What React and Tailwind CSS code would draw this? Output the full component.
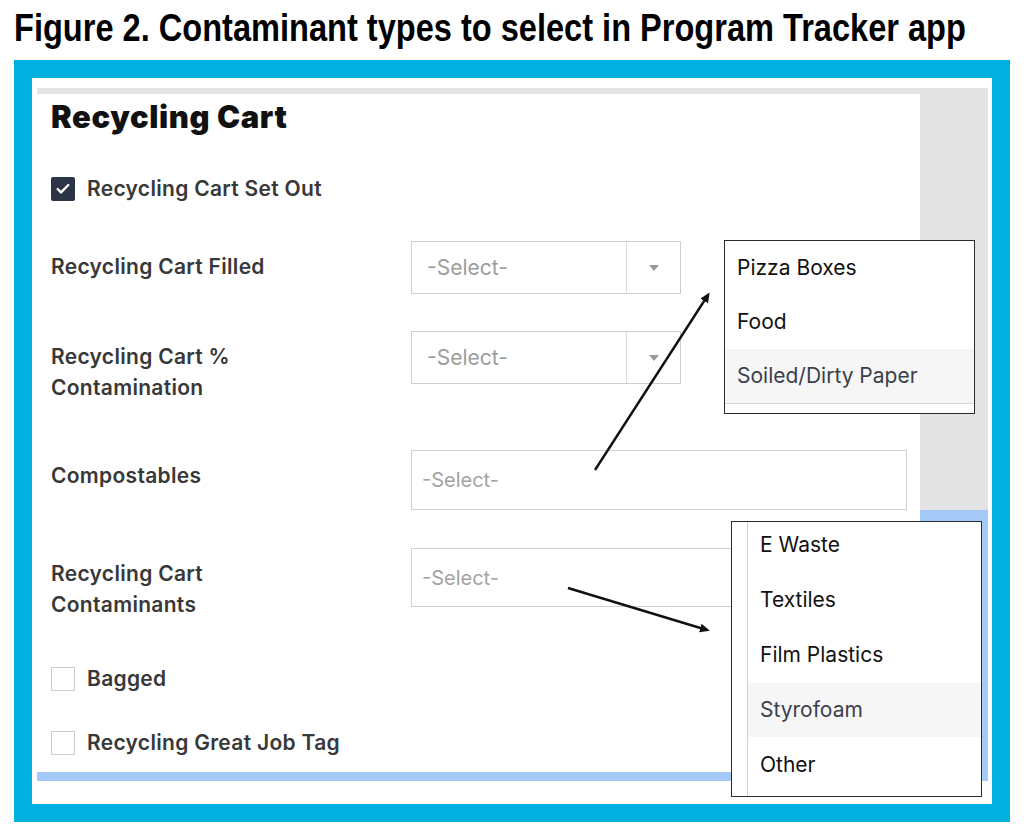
import { Check } from 'lucide-react';

const ui = "font-['Inter',sans-serif]";

const Caret = () => (
  <svg width="10" height="6" viewBox="0 0 10 6" className="block">
    <path d="M0 0 L10 0 L5 6 Z" fill="#9a9a9a" />
  </svg>
);

const Dropdown = () => (
  <div className="w-[270px] h-[53px] border border-[#cfcfcf] flex">
    <div className="flex-1 flex items-center pl-[15px] text-[21px] text-[#9c9c9c]">-Select-</div>
    <div className="w-[54px] border-l border-[#dcdcdc] flex items-center justify-center">
      <Caret />
    </div>
  </div>
);

const MultiInput = ({ h }) => (
  <div className={`w-[496px] ${h} border border-[#cfcfcf] flex items-center pl-[10px] text-[20px] text-[#a3a3a3]`}>
    -Select-
  </div>
);

const Box = ({ checked }) =>
  checked ? (
    <div className="w-[24px] h-[24px] rounded-[2px] bg-[#2e3447] flex items-center justify-center">
      <Check className="w-[16px] h-[16px] text-white" strokeWidth={3.5} />
    </div>
  ) : (
    <div className="w-[24px] h-[24px] border border-[#cccccc] bg-white" />
  );

const Label = ({ children }) => (
  <div className="w-[360px] pt-[10px] leading-[31px] text-[21px] tracking-[0.3px] font-semibold text-[#383838]">
    {children}
  </div>
);

const CheckRow = ({ checked, mt, children }) => (
  <div className={`${mt} h-[24px] flex items-center gap-[12px]`}>
    <Box checked={checked} />
    <span className="text-[21px] tracking-[0.3px] font-semibold text-[#383838] leading-[24px]">{children}</span>
  </div>
);

const Option = ({ active, children }) => (
  <div
    className={`h-[54px] pl-[12px] flex items-center text-[21px] ${
      active ? 'bg-[#f6f6f6] text-[#3a3f4c]' : 'text-[#111]'
    }`}
  >
    {children}
  </div>
);

export default function App() {
  return (
    <div className="w-[1024px] h-[840px] bg-white relative overflow-hidden">
      <div className="h-[60px] pl-[14px] pt-[6px]">
        <h1 className="origin-left scale-x-[0.835] font-['Liberation_Sans',sans-serif] font-bold text-[39px] leading-[44px] text-black whitespace-nowrap">
          Figure 2. Contaminant types to select in Program Tracker app
        </h1>
      </div>

      <div className="ml-[14px] w-[996px] h-[762px] border-[18px] border-[#00b0e0] bg-white pt-[10px] pl-[5px] pr-[4px] pb-[23px]">
        <div className={`h-full flex flex-col ${ui}`}>
          <div className="h-[6px] bg-[#e4e4e4]" />
          <div className="flex flex-1">
            {/* form */}
            <div className="w-[883px] pl-[14px] flex flex-col">
              <h2 className="mt-[5px] h-[36px] leading-[36px] text-[31px] font-black text-[#111] tracking-[0.6px]">
                Recycling Cart
              </h2>
              <CheckRow checked mt="mt-[42px]">Recycling Cart Set Out</CheckRow>
              <div className="mt-[40px] flex items-start">
                <Label>Recycling Cart Filled</Label>
                <Dropdown />
              </div>
              <div className="mt-[37px] flex items-start">
                <Label>
                  Recycling Cart %<br />Contamination
                </Label>
                <Dropdown />
              </div>
              <div className="mt-[47px] flex items-start">
                <Label>Compostables</Label>
                <MultiInput h="h-[60px]" />
              </div>
              <div className="mt-[38px] flex items-start">
                <Label>
                  Recycling Cart<br />Contaminants
                </Label>
                <MultiInput h="h-[59px]" />
              </div>
              <CheckRow mt="mt-[47px]">Bagged</CheckRow>
              <CheckRow mt="mt-[40px]">Recycling Great Job Tag</CheckRow>
            </div>
            {/* scroll column */}
            <div className="flex-1 flex flex-col">
              <div className="h-[416px] bg-[#e4e4e4]" />
              <div className="flex-1 bg-[#a4c9f6]" />
            </div>
          </div>
          <div className="h-[9px] bg-[#a4c9f6]" />
        </div>
      </div>

      {/* option menu 1 */}
      <div className={`absolute left-[724px] top-[240px] w-[251px] h-[174px] border-[1.5px] border-[#2a2a2a] bg-white overflow-hidden ${ui}`}>
        <Option>Pizza Boxes</Option>
        <Option>Food</Option>
        <Option active>Soiled/Dirty Paper</Option>
        <div className="border-t border-[#d8d8d8]" />
      </div>

      {/* option menu 2 */}
      <div className={`absolute left-[731px] top-[521px] w-[251px] h-[276px] border-[1.5px] border-[#2a2a2a] bg-white overflow-hidden flex ${ui}`}>
        <div className="w-[16px] border-r border-[#cfcfcf]" />
        <div className="flex-1 -mt-[4px] flex flex-col gap-[1px]">
          <Option>E Waste</Option>
          <Option>Textiles</Option>
          <Option>Film Plastics</Option>
          <Option active>Styrofoam</Option>
          <Option>Other</Option>
        </div>
      </div>

      {/* arrows */}
      <svg className="absolute left-0 top-0 pointer-events-none" width="1024" height="840">
        <defs>
          <marker id="head" markerWidth="10" markerHeight="10" refX="7" refY="5" orient="auto" markerUnits="userSpaceOnUse">
            <path d="M0 0.5 L10 5 L0 9.5 Z" fill="#111" />
          </marker>
        </defs>
        <line x1="595" y1="470" x2="708" y2="295" stroke="#111" strokeWidth="2.4" markerEnd="url(#head)" />
        <line x1="568" y1="588" x2="707" y2="630" stroke="#111" strokeWidth="2.4" markerEnd="url(#head)" />
      </svg>
    </div>
  );
}
